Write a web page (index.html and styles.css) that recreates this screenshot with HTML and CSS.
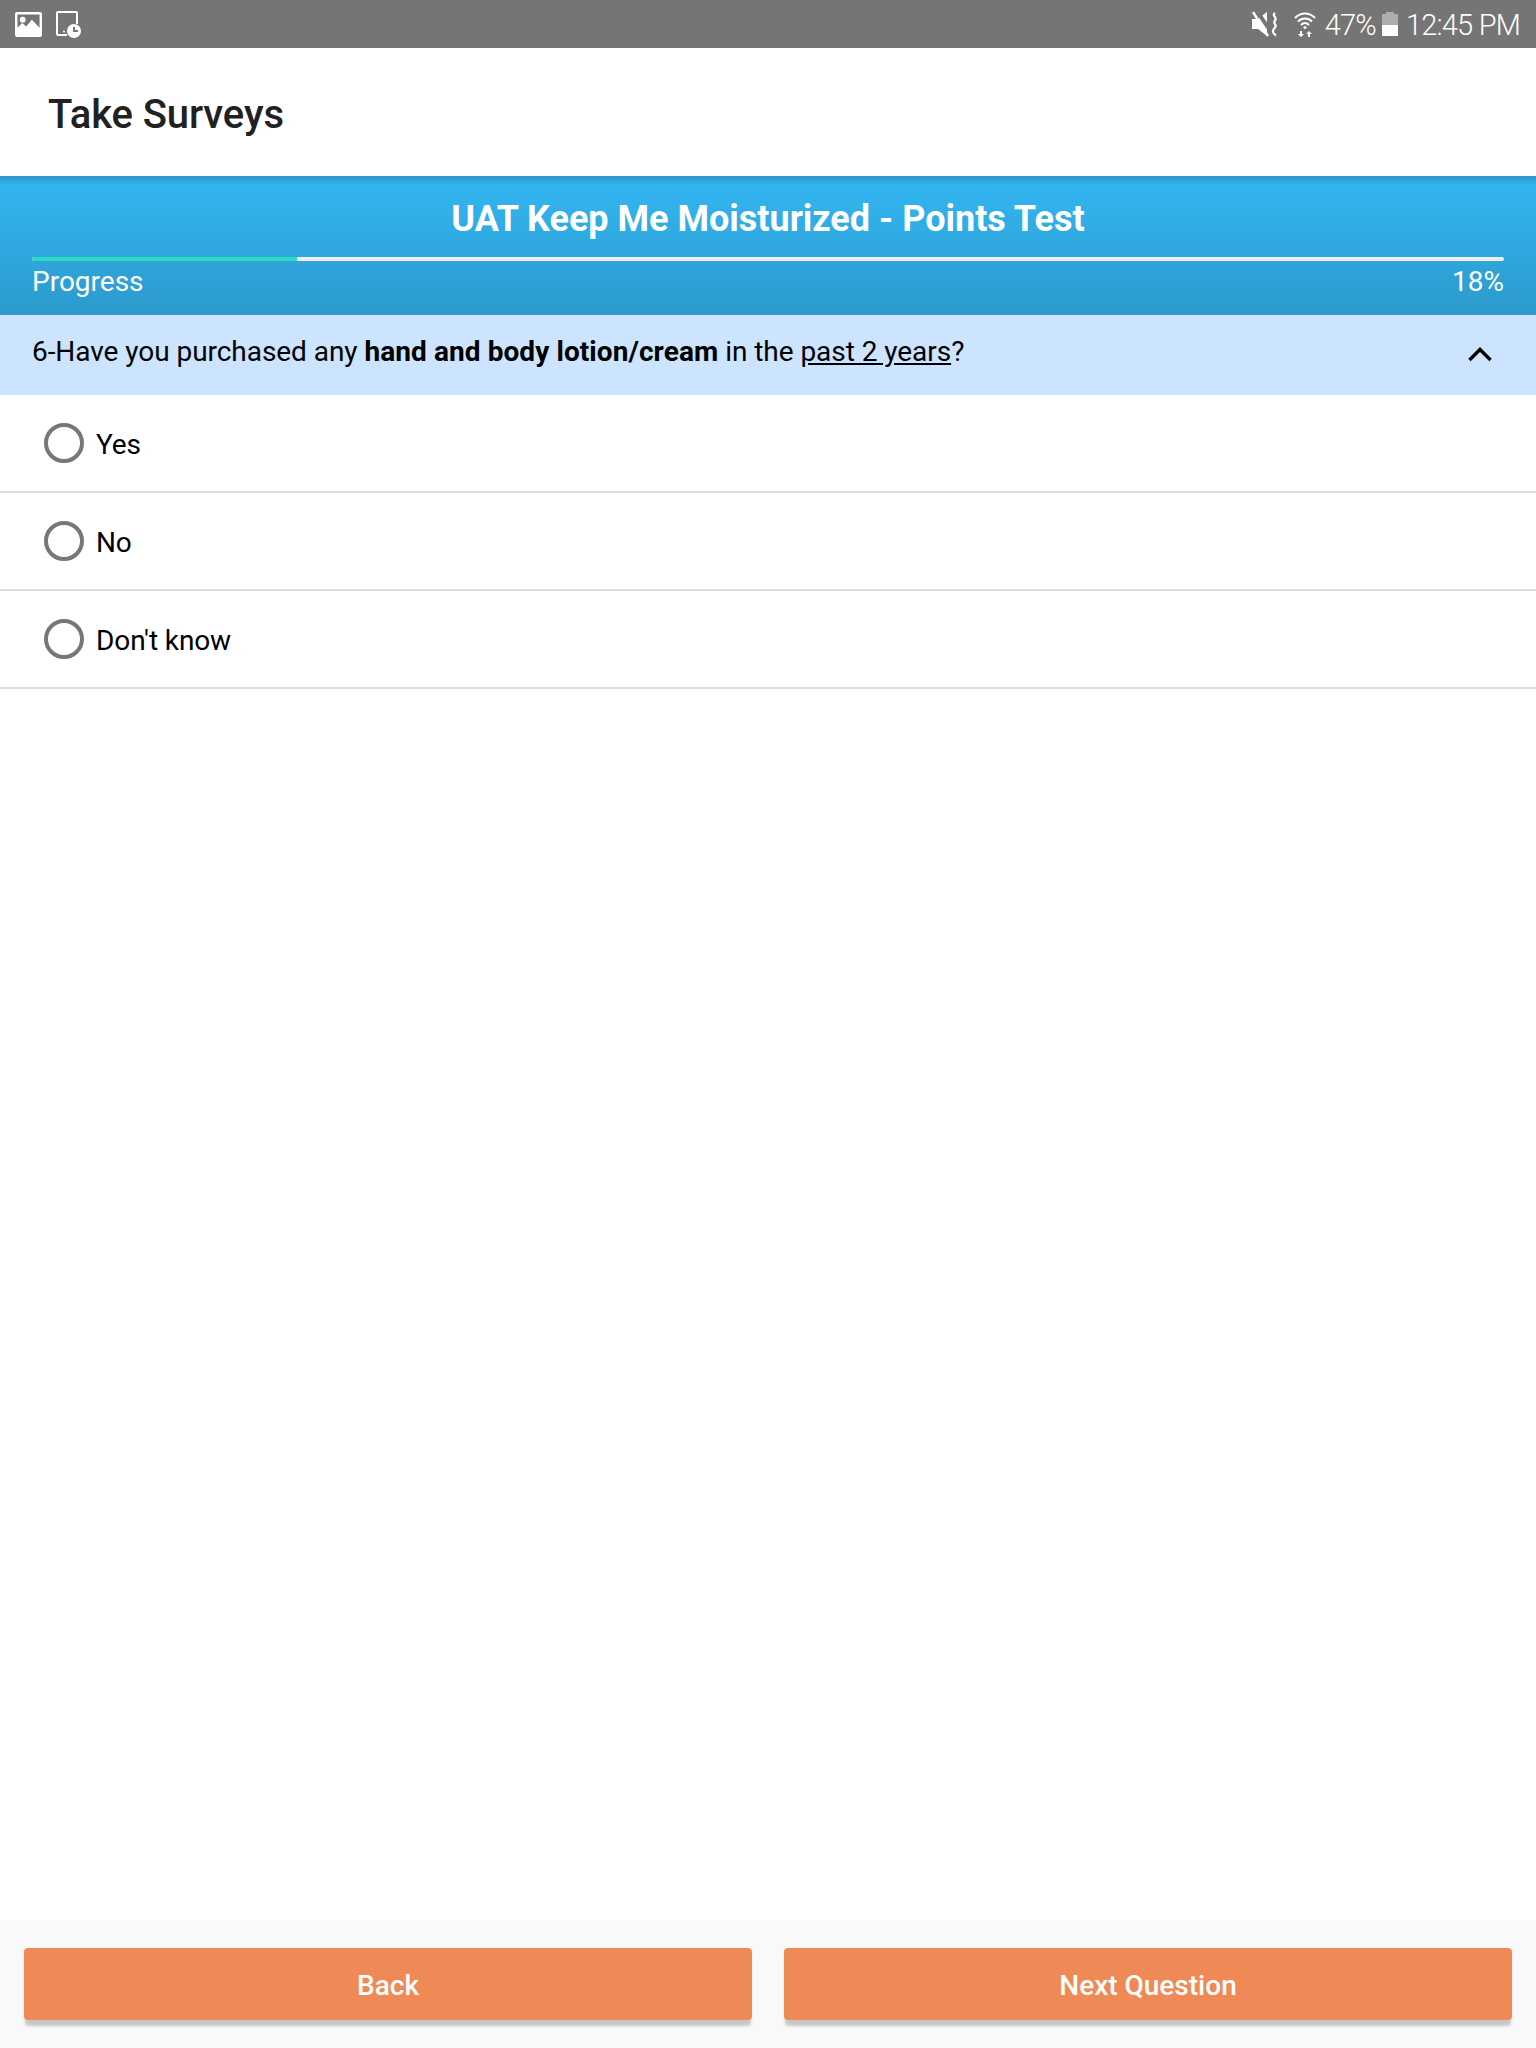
FILE: index.html
```html
<!DOCTYPE html>
<html lang="en">
<head>
  <meta charset="UTF-8">
  <title>Take Surveys</title>
  <link rel="stylesheet" href="styles.css">
</head>
<body>
  <div class="screen">

    <div class="status-bar">
      <div class="status-left">
        <svg class="icon-image" width="27" height="25" viewBox="0 0 28 26">
          <path fill="#fff" fill-rule="evenodd" d="M2 0h24a2 2 0 0 1 2 2v22a2 2 0 0 1-2 2H2a2 2 0 0 1-2-2V2a2 2 0 0 1 2-2zM2.500 2.500v14l5-5 4 3.500 6-7 8 8.500V2.500zM8 5a3 3 0 1 1 0 6 3 3 0 0 1 0-6z"/>
        </svg>
        <svg class="icon-tablet" width="26" height="27" viewBox="0 0 26 27">
          <path fill="none" stroke="#fff" stroke-width="2" d="M11 24H2a1 1 0 0 1-1-1V2a1 1 0 0 1 1-1h18a1 1 0 0 1 1 1v11"/>
          <circle cx="8" cy="20.500" r="1" fill="#fff"/>
          <circle cx="18" cy="20" r="7" fill="#fff"/>
          <path fill="none" stroke="#757575" stroke-width="2" d="M18 16v4h4"/>
        </svg>
      </div>
      <div class="status-right">
        <svg class="icon-mute" width="28" height="26" viewBox="0 0 28 26">
          <path fill="#fff" d="M1 8h6l9-7v24l-9-7H1z"/>
          <path fill="none" stroke="#757575" stroke-width="4" d="M6 0l16 24"/>
          <path fill="none" stroke="#fff" stroke-width="2.500" d="M2 1l15 24"/>
          <path fill="none" stroke="#fff" stroke-width="2.200" d="M24 2c-4 3 3 4 0 7.500s3 4 0 7-3 5 1 8"/>
        </svg>
        <svg class="icon-wifi" width="22" height="26" viewBox="0 0 22 26">
          <path fill="none" stroke="#fff" stroke-width="2" d="M1 7c6-6 14-6 20 0M4 10.500c4-4 10-4 14 0M7 14c2.500-2.500 5.500-2.500 8 0"/>
          <circle cx="11" cy="16.500" r="1.500" fill="#fff"/>
          <path fill="#fff" d="M6 20h2v3h2l-3 3-3-3h2zM15 20l3 3h-2v3h-2v-3h-2z"/>
        </svg>
        <span class="status-text battery-text">47%</span>
        <div class="battery">
          <div class="battery-cap"></div>
          <div class="battery-level"></div>
        </div>
        <span class="status-text">12:45 PM</span>
      </div>
    </div>

    <div class="app-bar">
      <h1>Take Surveys</h1>
    </div>

    <div class="survey-header">
      <h2>UAT Keep Me Moisturized - Points Test</h2>
      <div class="progress-track">
        <div class="progress-fill" style="width: 18%"></div>
      </div>
      <div class="progress-labels">
        <span>Progress</span>
        <span>18%</span>
      </div>
    </div>

    <div class="question">
      <p>6-Have you purchased any <b>hand and body lotion/cream</b> in the <u>past 2 years</u>?</p>
      <svg class="chevron" width="24" height="16" viewBox="0 0 24 16">
        <path fill="none" stroke="#000" stroke-width="3.400" d="M1.500 14L12 3.500 22.500 14"/>
      </svg>
    </div>

    <div class="options">
      <div class="option"><span class="radio"></span><span class="option-label">Yes</span></div>
      <div class="option"><span class="radio"></span><span class="option-label">No</span></div>
      <div class="option"><span class="radio"></span><span class="option-label">Don't know</span></div>
    </div>

    <div class="footer">
      <button>Back</button>
      <button>Next Question</button>
    </div>

  </div>
</body>
</html>
```
FILE: styles.css
```css
* {
  box-sizing: border-box;
}

body {
  margin: 0;
  font-family: Roboto, "Liberation Sans", sans-serif;
  background: #fff;
}

.screen {
  display: flex;
  flex-direction: column;
  height: 2048px;
}

.status-bar {
  display: flex;
  justify-content: space-between;
  align-items: center;
  height: 48px;
  padding: 0 16px 0 15px;
  background: #757575;
  color: #fff;
}

.status-left, .status-right {
  display: flex;
  align-items: center;
}

.icon-tablet {
  margin-left: 14px;
  margin-top: 1px;
}

.icon-wifi {
  margin-left: 15px;
}

.status-text {
  font-size: 29px;
  font-weight: 300;
  letter-spacing: -0.8px;
  line-height: 48px;
  padding-top: 1px;
}

.battery-text {
  margin-left: 9px;
}

.battery {
  width: 16px;
  height: 24px;
  margin: 0 8px 0 6px;
  display: flex;
  flex-direction: column;
  align-items: center;
}

.battery-cap {
  width: 8px;
  height: 2px;
  background: #adadad;
}

.battery-level {
  width: 16px;
  height: 22px;
  background: linear-gradient(#adadad 50%, #fff 50%);
}

.app-bar {
  height: 128px;
  padding: 5px 0 0 48px;
  display: flex;
  align-items: center;
}

.app-bar h1 {
  margin: 0;
  font-size: 40px;
  font-weight: 500;
  letter-spacing: -0.1px;
  color: #212121;
}

.survey-header {
  height: 139px;
  padding: 0 32px;
  color: #fff;
  background: linear-gradient(#2c95c2 0, #33b5f0 9px, #2c9acd 100%);
}

.survey-header h2 {
  margin: 0;
  padding-top: 20px;
  height: 81px;
  font-size: 36px;
  line-height: 46px;
  font-weight: 700;
  text-align: center;
}

.progress-track {
  height: 4px;
  border-radius: 2px;
  background: #efefef;
  overflow: hidden;
}

.progress-fill {
  height: 100%;
  background: #2ddcc0;
}

.progress-labels {
  display: flex;
  justify-content: space-between;
  font-size: 28px;
  line-height: 34px;
  margin-top: 4px;
}

.question {
  height: 80px;
  padding: 0 32px;
  display: flex;
  justify-content: space-between;
  align-items: center;
  background: #cce4fd;
  color: #000;
}

.question p {
  margin: 0 0 7px;
  font-size: 28px;
  letter-spacing: -0.05px;
}

.question b {
  letter-spacing: 0.08px;
}

.chevron {
  margin-right: 12px;
  margin-top: -2px;
}

.option {
  height: 98px;
  padding-left: 44px;
  display: flex;
  align-items: center;
  gap: 12px;
  border-bottom: 2px solid #dedede;
  font-size: 28px;
  color: #000;
}

.option-label {
  margin-top: 2px;
  letter-spacing: -0.1px;
}

.radio {
  width: 40px;
  height: 40px;
  border: 4px solid #777;
  border-radius: 50%;
}

.footer {
  margin-top: auto;
  height: 128px;
  padding: 28px 24px 0;
  display: flex;
  gap: 32px;
  background: #f9f9f9;
}

.footer button {
  flex: 1;
  height: 72px;
  padding-top: 3px;
  border: none;
  border-radius: 4px;
  background: #ef8a56;
  color: #fff;
  font-family: inherit;
  font-size: 28px;
  font-weight: 500;
  box-shadow: 0 7px 3px -1px rgba(0,0,0,0.2);
}
```
